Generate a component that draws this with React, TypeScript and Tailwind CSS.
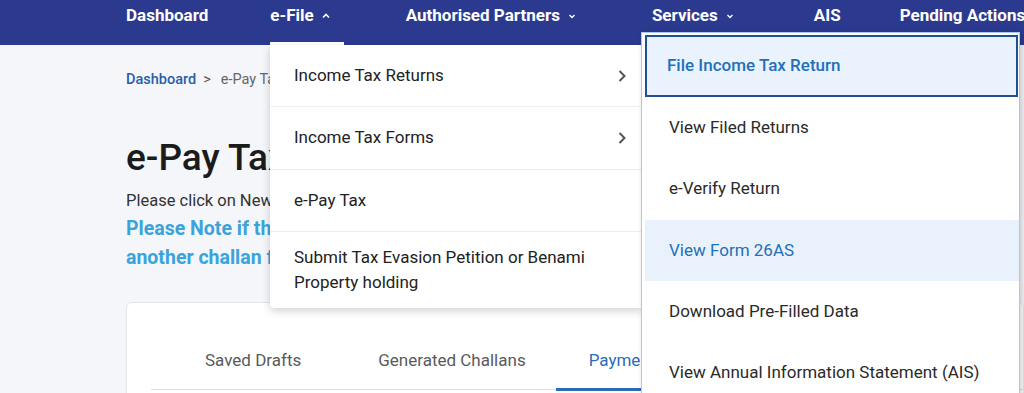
import React from "react";

function ChevronUp() {
  return (
    <svg width="10" height="10" viewBox="0 0 10 10" className="ml-[7px] mt-[1px]">
      <path d="M2 6.5 L5 3.5 L8 6.5" fill="none" stroke="white" strokeWidth="1.6" />
    </svg>
  );
}
function ChevronDown() {
  return (
    <svg width="10" height="10" viewBox="0 0 10 10" className="ml-[7px] mt-[1px]">
      <path d="M2.5 4 L5 6.5 L7.5 4" fill="none" stroke="white" strokeWidth="1.4" />
    </svg>
  );
}
function ChevronRight() {
  return (
    <svg width="12" height="16" viewBox="0 0 12 16">
      <path d="M3.5 3 L8.5 8 L3.5 13" fill="none" stroke="#555" strokeWidth="2" />
    </svg>
  );
}

export default function App() {
  return (
    <div className="relative w-[1024px] h-[393px] overflow-hidden bg-[#f4f6fa] font-['Roboto',sans-serif]">
      {/* Header */}
      <header className="h-[45px] bg-[#2b3a8f] flex items-start pt-[4px] text-white font-bold text-[17px] leading-[22px] whitespace-nowrap overflow-hidden">
        <div className="ml-[126px]">Dashboard</div>
        <div className="ml-[62px] flex items-center">e-File<ChevronUp /></div>
        <div className="ml-[75px] flex items-center">Authorised Partners<ChevronDown /></div>
        <div className="ml-[75px] flex items-center">Services<ChevronDown /></div>
        <div className="ml-[79px]">AIS</div>
        <div className="ml-[59px] shrink-0">Pending Actions</div>
      </header>

      {/* Main */}
      <main className="pl-[126px]">
        <div className="mt-[25px] flex items-center text-[14.5px] leading-[20px] whitespace-nowrap">
          <span className="text-[#2a5ea8] font-medium">Dashboard</span>
          <span className="ml-[7px] mr-[10px] text-[#555]">&gt;</span>
          <span className="text-[#666]">e-Pay Tax</span>
        </div>
        <h1 className="mt-[46px] text-[37px] leading-[44px] font-medium text-[#1b1b1b]">e-Pay Tax</h1>
        <p className="mt-[9px] text-[16.5px] leading-[24px] text-[#333] whitespace-nowrap">
          Please click on New Payment to pay taxes. Payment status can be checked under the Payment History tab.
        </p>
        <div className="mt-[1px] text-[19.5px] leading-[29px] font-bold text-[#3aa3dc] whitespace-nowrap">
          <div>Please Note if the payment status is not updated, kindly wait before generating</div>
          <div>another challan for the same payment.</div>
        </div>
        <div className="mt-[30px] h-[140px] bg-white border border-[#e3e6ec] rounded-[6px]">
          <div className="ml-[24px] mt-[46px] h-[41px] border-b border-[#dcdfe5] flex text-[17px] leading-[22px] whitespace-nowrap">
            <div className="ml-[54px] text-[#5a5a5a]">Saved Drafts</div>
            <div className="ml-[77px] text-[#5a5a5a]">Generated Challans</div>
            <div className="ml-[30px] px-[33px] text-[#2a6cb8] border-b-[3px] border-[#2a6cb8] h-[42px]">Payment History</div>
          </div>
        </div>
      </main>

      {/* e-File dropdown */}
      <div className="absolute left-[270px] top-[42px] w-[74px] h-[4px] bg-white" />
      <div className="absolute left-[270px] top-[45px] w-[374px] bg-white shadow-[0_3px_8px_rgba(0,0,0,0.18)] rounded-b-[4px] text-[17px] text-[#222]">
        <div className="h-[62px] flex items-center justify-between pl-[24px] pr-[16px] border-b border-[#f0f0f0]">
          <span>Income Tax Returns</span>
          <ChevronRight />
        </div>
        <div className="h-[63px] flex items-center justify-between pl-[24px] pr-[16px] border-b border-[#ececec]">
          <span>Income Tax Forms</span>
          <ChevronRight />
        </div>
        <div className="h-[62px] flex items-center pl-[24px] border-b border-[#ececec]">
          <span>e-Pay Tax</span>
        </div>
        <div className="h-[76px] flex items-center pl-[24px] pr-[30px] leading-[25px]">
          <span>Submit Tax Evasion Petition or Benami Property holding</span>
        </div>
      </div>

      {/* Services dropdown */}
      <div className="absolute left-[641px] top-[32px] w-[379px] h-[380px] bg-white border border-[#a9c9ec] shadow-[2px_2px_6px_rgba(0,0,0,0.2)] text-[17px] text-[#2a2a2a] whitespace-nowrap">
        <div className="ml-[3px] mr-[1px] mt-[2px] h-[62px] flex items-center pl-[20px] bg-[#eaf3fd] border-2 border-[#214f8f] text-[#2270b9] font-medium">
          File Income Tax Return
        </div>
        <div className="ml-[3px] h-[61px] flex items-center pl-[24px]">View Filed Returns</div>
        <div className="ml-[3px] h-[62px] flex items-center pl-[24px]">e-Verify Return</div>
        <div className="ml-[3px] h-[61px] flex items-center pl-[24px] bg-[#e9f2fc] text-[#2270b9]">View Form 26AS</div>
        <div className="ml-[3px] h-[61px] flex items-center pl-[24px]">Download Pre-Filled Data</div>
        <div className="ml-[3px] h-[61px] flex items-center pl-[24px]">View Annual Information Statement (AIS)</div>
      </div>
    </div>
  );
}
